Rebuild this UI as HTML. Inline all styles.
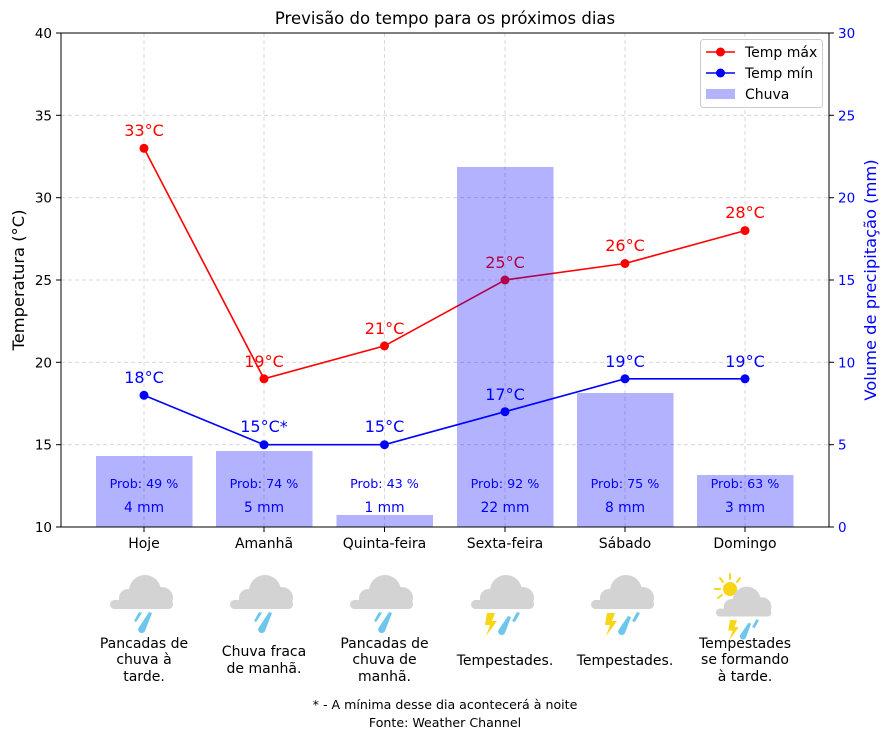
<!DOCTYPE html>
<html><head><meta charset="utf-8"><style>
html,body{margin:0;padding:0;background:#fff;}
svg{display:block;font-family:"DejaVu Sans","Liberation Sans",sans-serif;}
</style></head><body>
<svg width="889" height="741" viewBox="0 0 889 741" xmlns="http://www.w3.org/2000/svg">
<defs>
<g id="cloud">
  <circle cx="2" cy="-6" r="16" fill="#d3d3d3"/>
  <circle cx="19" cy="1" r="11" fill="#d3d3d3"/>
  <circle cx="-15" cy="1" r="9" fill="#d3d3d3"/>
  <rect x="-33" y="3" width="63" height="9" rx="4.5" fill="#d3d3d3"/>
</g>
<g id="rain">
  <path d="M-4 15 L-1 16 L-7 25 L-9 24 Z" fill="#6ec6ec"/>
  <path d="M6 15 L9 16 L2 34 A3.5 3.5 0 0 1 -4.5 31 Z" fill="#6ec6ec"/>
</g>
<g id="storm">
  <path d="M-17 16 L-9 16 L-12 24 L-7 24 L-18 39 L-14 28 L-19 28 Z" fill="#f8d617"/>
  <path d="M4 19 L7 20 L1 36 A3.5 3.5 0 0 1 -5.5 33 Z" fill="#6ec6ec"/>
  <path d="M13 15 L16 16 L11 25 L8 24 Z" fill="#6ec6ec"/>
</g>
</defs>

<text x="445" y="24" font-size="16.5" text-anchor="middle">Previsão do tempo para os próximos dias</text>

<g stroke="#d0d0d0" stroke-width="0.8" stroke-dasharray="4,3">
  <line x1="61" x2="829" y1="444.7" y2="444.7"/>
  <line x1="61" x2="829" y1="362.3" y2="362.3"/>
  <line x1="61" x2="829" y1="280" y2="280"/>
  <line x1="61" x2="829" y1="197.7" y2="197.7"/>
  <line x1="61" x2="829" y1="115.3" y2="115.3"/>
  <line x1="144" x2="144" y1="33" y2="527"/>
  <line x1="264" x2="264" y1="33" y2="527"/>
  <line x1="384.5" x2="384.5" y1="33" y2="527"/>
  <line x1="505" x2="505" y1="33" y2="527"/>
  <line x1="625" x2="625" y1="33" y2="527"/>
  <line x1="745" x2="745" y1="33" y2="527"/>
</g>

<polyline points="144,148.3 264,378.8 384.5,345.9 505,280 625,263.5 745,230.6" fill="none" stroke="#ff0000" stroke-width="1.6"/>
<polyline points="144,395.3 264,444.7 384.5,444.7 505,411.7 625,378.8 745,378.8" fill="none" stroke="#0000ff" stroke-width="1.6"/>
<g fill="#ff0000">
  <circle cx="144" cy="148.3" r="4.5"/><circle cx="264" cy="378.8" r="4.5"/><circle cx="384.5" cy="345.9" r="4.5"/>
  <circle cx="505" cy="280" r="4.5"/><circle cx="625" cy="263.5" r="4.5"/><circle cx="745" cy="230.6" r="4.5"/>
</g>
<g fill="#0000ff">
  <circle cx="144" cy="395.3" r="4.5"/><circle cx="264" cy="444.7" r="4.5"/><circle cx="384.5" cy="444.7" r="4.5"/>
  <circle cx="505" cy="411.7" r="4.5"/><circle cx="625" cy="378.8" r="4.5"/><circle cx="745" cy="378.8" r="4.5"/>
</g>
<g font-size="16" text-anchor="middle" fill="#ff0000">
  <text x="144" y="136">33°C</text><text x="264" y="367">19°C</text><text x="384.5" y="334">21°C</text>
  <text x="505" y="268">25°C</text><text x="625" y="251">26°C</text><text x="745" y="218">28°C</text>
</g>
<g font-size="16" text-anchor="middle" fill="#0000ff">
  <text x="144" y="383">18°C</text><text x="264" y="432">15°C*</text><text x="384.5" y="432">15°C</text>
  <text x="505" y="400">17°C</text><text x="625" y="367">19°C</text><text x="745" y="367">19°C</text>
</g>

<g fill="#0000ff" fill-opacity="0.3">
  <rect x="96" y="456" width="96.5" height="71"/>
  <rect x="216" y="451" width="96.5" height="76"/>
  <rect x="336.5" y="515" width="96.5" height="12"/>
  <rect x="457" y="167" width="96.5" height="360"/>
  <rect x="577" y="393" width="96.5" height="134"/>
  <rect x="697" y="475" width="96.5" height="52"/>
</g>
<g fill="#0000ff" text-anchor="middle">
  <g font-size="12.7">
    <text x="144" y="488">Prob: 49 %</text><text x="264" y="488">Prob: 74 %</text><text x="384.5" y="488">Prob: 43 %</text>
    <text x="505" y="488">Prob: 92 %</text><text x="625" y="488">Prob: 75 %</text><text x="745" y="488">Prob: 63 %</text>
  </g>
  <g font-size="13.8">
    <text x="144" y="512">4 mm</text><text x="264" y="512">5 mm</text><text x="384.5" y="512">1 mm</text>
    <text x="505" y="512">22 mm</text><text x="625" y="512">8 mm</text><text x="745" y="512">3 mm</text>
  </g>
</g>

<rect x="61" y="33" width="768" height="494" fill="none" stroke="#000" stroke-width="1"/>
<g stroke="#000" stroke-width="1">
  <line x1="56" x2="61" y1="527" y2="527"/><line x1="56" x2="61" y1="444.7" y2="444.7"/><line x1="56" x2="61" y1="362.3" y2="362.3"/>
  <line x1="56" x2="61" y1="280" y2="280"/><line x1="56" x2="61" y1="197.7" y2="197.7"/><line x1="56" x2="61" y1="115.3" y2="115.3"/><line x1="56" x2="61" y1="33" y2="33"/>
  <line x1="829" x2="834" y1="527" y2="527"/><line x1="829" x2="834" y1="444.7" y2="444.7"/><line x1="829" x2="834" y1="362.3" y2="362.3"/>
  <line x1="829" x2="834" y1="280" y2="280"/><line x1="829" x2="834" y1="197.7" y2="197.7"/><line x1="829" x2="834" y1="115.3" y2="115.3"/><line x1="829" x2="834" y1="33" y2="33"/>
  <line x1="144" x2="144" y1="527" y2="532"/><line x1="264" x2="264" y1="527" y2="532"/><line x1="384.5" x2="384.5" y1="527" y2="532"/>
  <line x1="505" x2="505" y1="527" y2="532"/><line x1="625" x2="625" y1="527" y2="532"/><line x1="745" x2="745" y1="527" y2="532"/>
</g>
<g font-size="13.5" text-anchor="end">
  <text x="52" y="532">10</text><text x="52" y="449.7">15</text><text x="52" y="367.3">20</text>
  <text x="52" y="285">25</text><text x="52" y="202.7">30</text><text x="52" y="120.3">35</text><text x="52" y="38">40</text>
</g>
<g font-size="13.5" fill="#0000ff">
  <text x="838" y="532">0</text><text x="838" y="449.7">5</text><text x="838" y="367.3">10</text>
  <text x="838" y="285">15</text><text x="838" y="202.7">20</text><text x="838" y="120.3">25</text><text x="838" y="38">30</text>
</g>
<g font-size="14" text-anchor="middle">
  <text x="144" y="548">Hoje</text><text x="264" y="548">Amanhã</text><text x="384.5" y="548">Quinta-feira</text>
  <text x="505" y="548">Sexta-feira</text><text x="625" y="548">Sábado</text><text x="745" y="548">Domingo</text>
</g>
<text transform="translate(24,280) rotate(-90)" font-size="16.3" text-anchor="middle">Temperatura (°C)</text>
<text transform="translate(876,280) rotate(-90)" font-size="16.3" text-anchor="middle" fill="#0000ff">Volume de precipitação (mm)</text>

<rect x="700.5" y="39.5" width="122" height="68" rx="3" fill="#fff" fill-opacity="0.85" stroke="#ccc"/>
<line x1="706" x2="735" y1="52" y2="52" stroke="#ff0000" stroke-width="1.6"/><circle cx="720.5" cy="52" r="4.5" fill="#ff0000"/>
<line x1="706" x2="735" y1="73" y2="73" stroke="#0000ff" stroke-width="1.6"/><circle cx="720.5" cy="73" r="4.5" fill="#0000ff"/>
<rect x="706" y="89" width="29" height="10" fill="#b3b3ff"/>
<g font-size="14"><text x="745" y="57">Temp máx</text><text x="745" y="78">Temp mín</text><text x="745" y="99">Chuva</text></g>

<use href="#cloud" transform="translate(143,597)"/><use href="#rain" transform="translate(143,597)"/>
<use href="#cloud" transform="translate(263,597)"/><use href="#rain" transform="translate(263,597)"/>
<use href="#cloud" transform="translate(383,597)"/><use href="#rain" transform="translate(383,597)"/>
<use href="#cloud" transform="translate(504,597)"/><use href="#storm" transform="translate(504,597)"/>
<use href="#cloud" transform="translate(624,597)"/><use href="#storm" transform="translate(624,597)"/>
<g transform="translate(730,589)">
  <circle cx="0" cy="0" r="7" fill="#f8d617"/>
  <g stroke="#f8d617" stroke-width="2" stroke-linecap="round">
    <line x1="0" y1="-10" x2="0" y2="-15"/><line x1="-7" y1="-7" x2="-10" y2="-11"/><line x1="7" y1="-7" x2="10" y2="-11"/>
    <line x1="-10" y1="0" x2="-15" y2="0"/><line x1="-8" y1="6" x2="-12" y2="9"/>
  </g>
</g>
<g transform="translate(745,606) scale(0.88)"><use href="#cloud"/><use href="#storm"/></g>

<g font-size="14" text-anchor="middle">
  <text x="144" y="648">Pancadas de</text><text x="144" y="664">chuva à</text><text x="144" y="681">tarde.</text>
  <text x="264" y="656">Chuva fraca</text><text x="264" y="673">de manhã.</text>
  <text x="384.5" y="648">Pancadas de</text><text x="384.5" y="664">chuva de</text><text x="384.5" y="681">manhã.</text>
  <text x="505" y="665">Tempestades.</text>
  <text x="625" y="665">Tempestades.</text>
  <text x="745" y="648">Tempestades</text><text x="745" y="664">se formando</text><text x="745" y="681">à tarde.</text>
</g>
<g font-size="12.6" text-anchor="middle">
  <text x="445" y="709">* - A mínima desse dia acontecerá à noite</text>
  <text x="445" y="727">Fonte: Weather Channel</text>
</g>
</svg>
</body></html>
